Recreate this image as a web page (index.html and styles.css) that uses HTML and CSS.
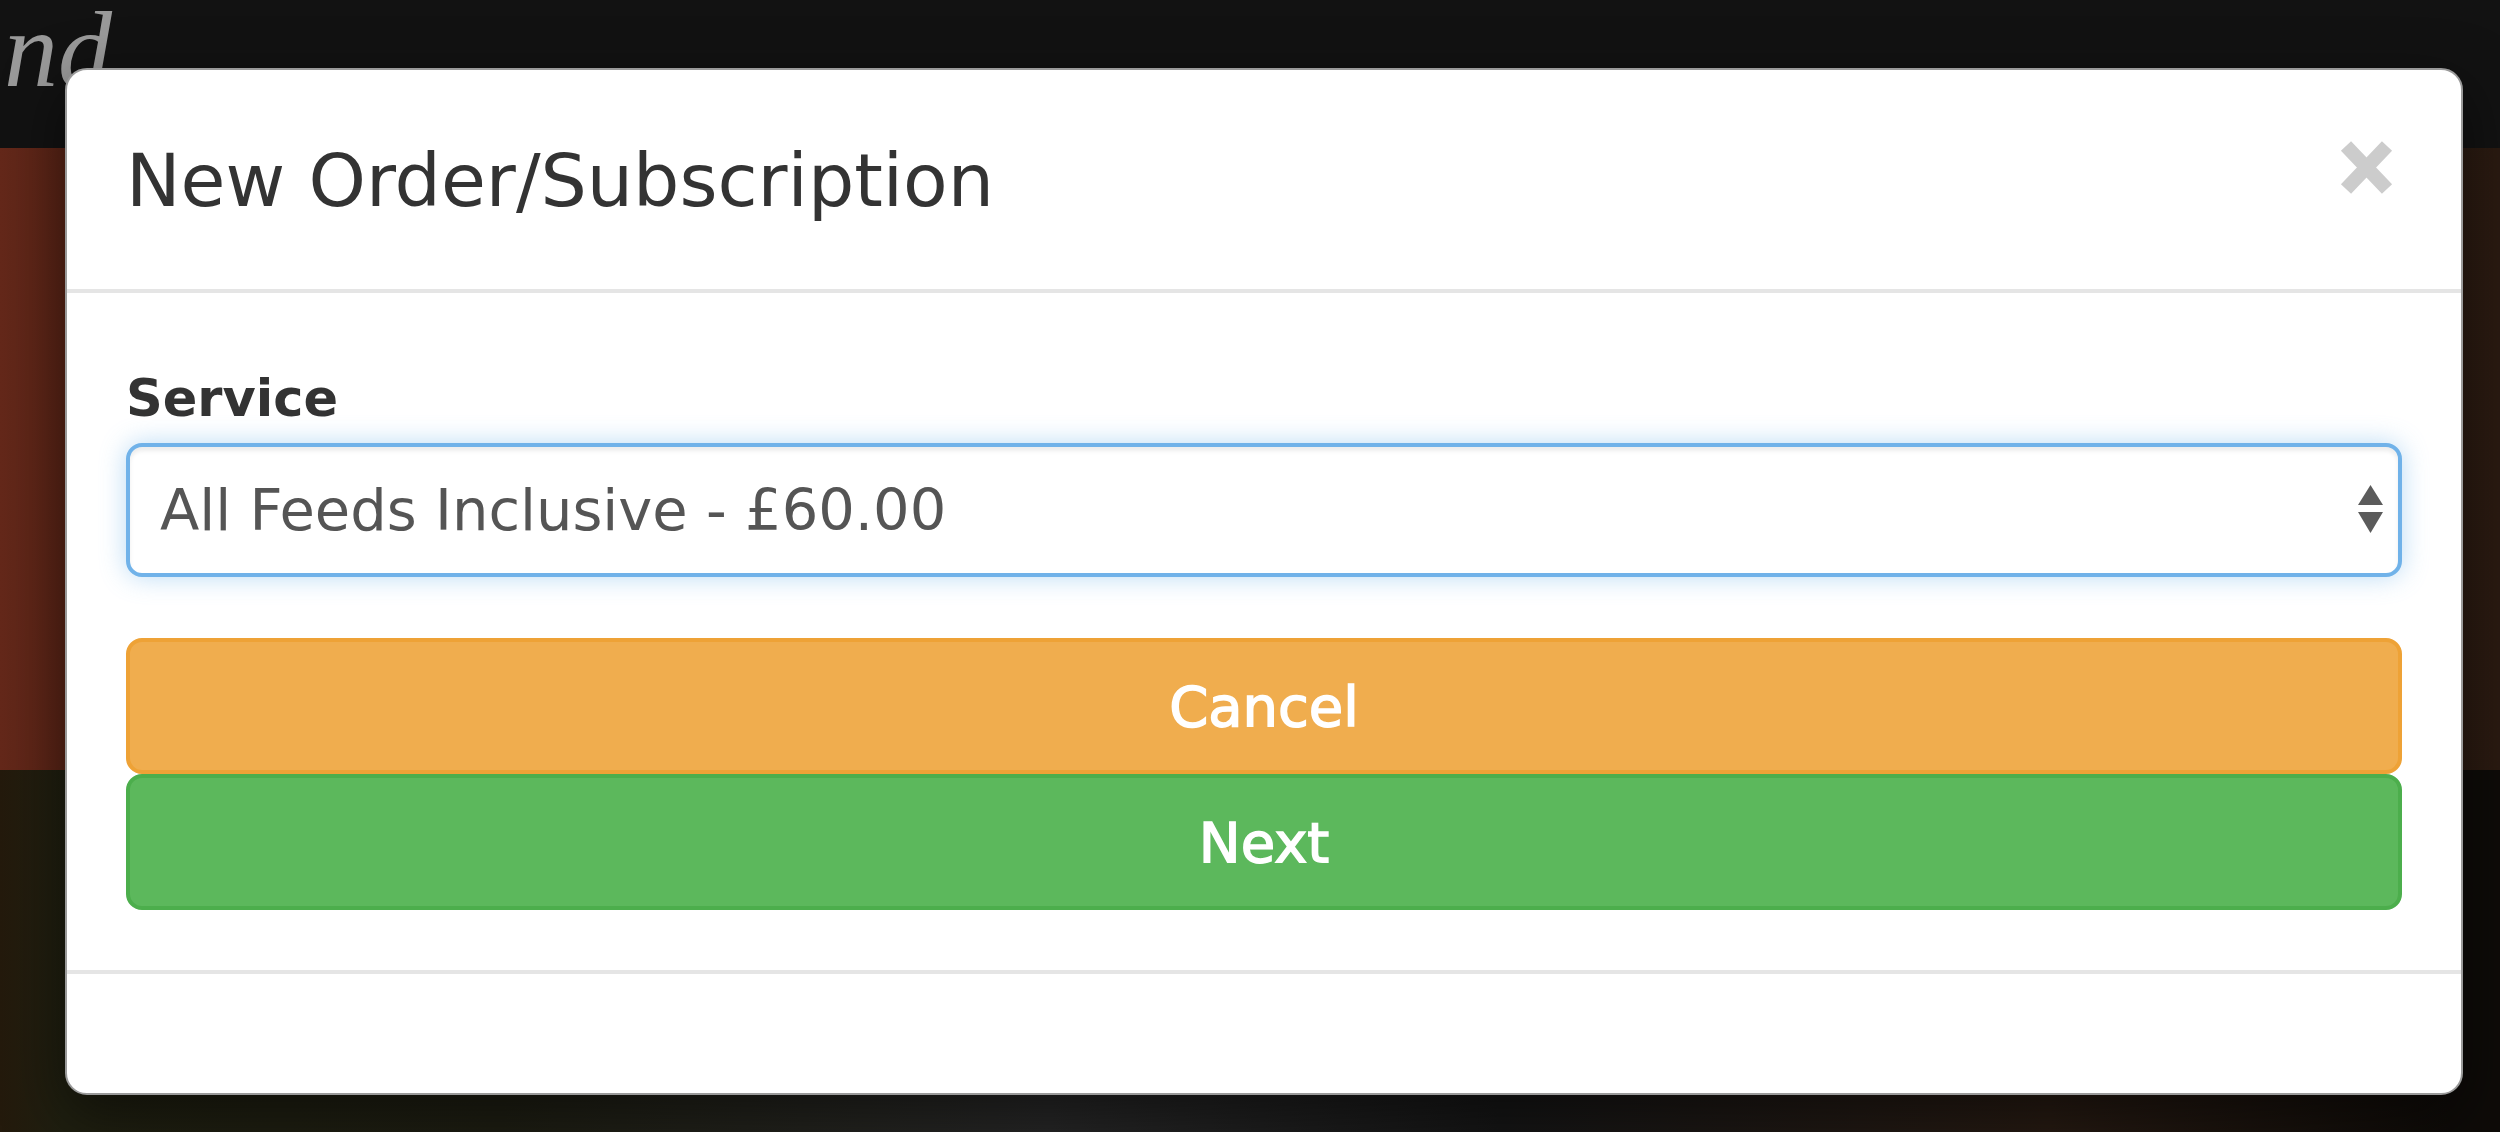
FILE: index.html
```html
<!DOCTYPE html>
<html lang="en">
<head>
<meta charset="utf-8">
<title>New Order/Subscription</title>
<link rel="stylesheet" href="styles.css">
</head>
<body>
<div class="page">
  <header class="topbar"><span class="logo">nd</span></header>
  <section class="hero"></section>
  <section class="lower"></section>
</div>

<div class="modal" role="dialog" aria-labelledby="modal-title">
  <div class="modal-header">
    <h4 class="modal-title" id="modal-title">New Order/Subscription</h4>
    <button class="close" type="button" aria-label="Close">
      <svg width="53" height="55" viewBox="0 0 53 55" aria-hidden="true">
        <path d="M6 6 L47 49 M47 6 L6 49" stroke="#cccccc" stroke-width="14" fill="none"/>
      </svg>
    </button>
  </div>
  <div class="modal-body">
    <div class="form-group">
      <label class="control-label" for="service">Service</label>
      <div class="select-wrap">
        <select id="service" class="form-control">
          <option>All Feeds Inclusive - £60.00</option>
        </select>
        <svg class="select-arrows" width="25" height="48" viewBox="0 0 25 48" aria-hidden="true">
          <polygon points="12.5,0 25,20 0,20" fill="#5b5b5b"/>
          <polygon points="0,27 25,27 12.5,48" fill="#5b5b5b"/>
        </svg>
      </div>
    </div>
    <button type="button" class="btn btn-warning">Cancel</button>
    <button type="button" class="btn btn-success">Next</button>
  </div>
  <div class="modal-footer"></div>
</div>
</body>
</html>
```

FILE: styles.css
```css
html, body {
  margin: 0;
  padding: 0;
}

body {
  width: 2500px;
  height: 1132px;
  overflow: hidden;
  background: #111;
  font-family: "DejaVu Sans", Verdana, sans-serif;
  color: #333;
}

.page {
  display: flex;
  flex-direction: column;
  height: 1132px;
}

.topbar {
  height: 148px;
  flex: none;
  background: #121212;
  overflow: hidden;
}

.logo {
  display: block;
  font-family: "Liberation Serif", "DejaVu Serif", serif;
  font-style: italic;
  font-size: 108px;
  line-height: 100px;
  color: #9a9a9a;
  margin-left: 4px;
  padding-top: 0;
}

.hero {
  height: 622px;
  flex: none;
  background: linear-gradient(90deg, #64281a 0%, #5a2416 2.4%, #3a2015 30%, #2e1d13 90%, #2a1a11 100%);
}

.lower {
  flex: 1;
  background: linear-gradient(90deg, #241a0c 0%, #1f1f10 2.5%, #1d1d12 20%, #262626 42%, #151515 60%, #261a12 82%, #0e0b08 98%, #0e0b08 100%);
}

/* Modal dialog (overlay) */
.modal {
  position: fixed;
  left: 65px;
  top: 68px;
  width: 2398px;
  box-sizing: border-box;
  background: #fff;
  border: 2px solid #9a9a9a;
  border-radius: 22px;
  box-shadow: 0 20px 60px rgba(0, 0, 0, 0.5);
}

.modal-header {
  display: flex;
  align-items: flex-start;
  justify-content: space-between;
  padding: 59px 59px 57px;
  border-bottom: 4px solid #e5e5e5;
}

.modal-title {
  margin: 0;
  font-size: 73px;
  font-weight: normal;
  line-height: 103px;
  color: #333;
}

.close {
  margin: 11px 9px 0 0;
  padding: 0;
  border: 0;
  background: transparent;
  line-height: 0;
  cursor: pointer;
}

.modal-body {
  padding: 60px 59px;
}

.form-group {
  margin-bottom: 61px;
}

.control-label {
  display: block;
  padding-top: 6px;
  margin-bottom: 4px;
  font-size: 51px;
  font-weight: bold;
  line-height: 80px;
  color: #333;
}

.select-wrap {
  position: relative;
}

.form-control {
  display: block;
  width: 100%;
  height: 134px;
  box-sizing: border-box;
  margin: 0;
  padding: 0 90px 0 30px;
  border: 4px solid #70b2e9;
  border-radius: 16px;
  background: #fff;
  font-family: "DejaVu Sans", Verdana, sans-serif;
  font-size: 57.5px;
  color: #555;
  -webkit-appearance: none;
  appearance: none;
  outline: none;
  box-shadow: inset 0 4px 4px rgba(0, 0, 0, 0.075), 0 0 26px rgba(102, 175, 233, 0.45);
}

.select-arrows {
  position: absolute;
  right: 19px;
  top: 42px;
}

.btn {
  display: block;
  width: 100%;
  height: 136px;
  box-sizing: border-box;
  margin: 0;
  padding: 0;
  border: 4px solid transparent;
  border-radius: 16px;
  font-family: "DejaVu Sans", Verdana, sans-serif;
  font-size: 56px;
  font-weight: normal;
  color: #fff;
  -webkit-text-stroke: 1.5px #fff;
  text-align: center;
  cursor: pointer;
}

.btn-warning {
  background: #f0ad4e;
  border-color: #eea236;
}

.btn-success {
  background: #5cb85c;
  border-color: #4cae4c;
}

.modal-footer {
  padding: 60px 59px 59px;
  border-top: 4px solid #e5e5e5;
}
```
